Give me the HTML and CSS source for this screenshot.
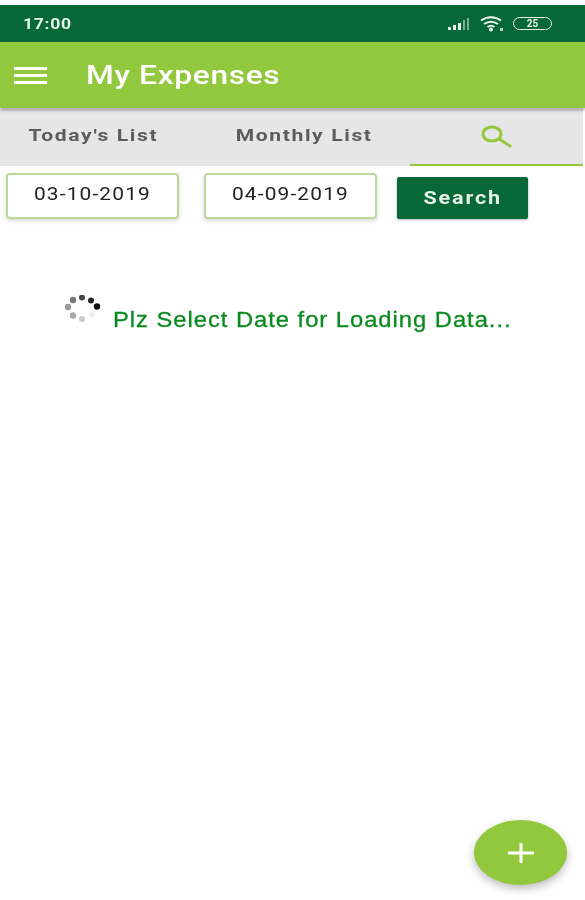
FILE: index.html
```html
<!DOCTYPE html>
<html lang="en">
<head>
    <meta charset="UTF-8">
    <meta name="viewport" content="width=device-width, initial-scale=1.0">
    <title>My Expenses</title>
    <link rel="stylesheet" href="styles.css">
</head>
<body>
    <div class="status-bar">
        <span class="clock">17:00</span>
        <div class="status-icons">
            <svg width="24" height="14" viewBox="0 0 24 14">
                <rect x="1" y="10" width="3" height="3" fill="#e8f2e8"/>
                <rect x="6" y="8" width="3" height="5" fill="#e8f2e8"/>
                <rect x="11" y="6" width="3" height="7" fill="#e8f2e8"/>
                <rect x="16" y="3" width="2" height="10" fill="#7fae8c"/>
                <rect x="20" y="1" width="2" height="12" fill="#7fae8c"/>
            </svg>
            <svg width="24" height="16" viewBox="0 0 24 16" fill="none" stroke="#eef5ee" stroke-width="2">
                <path d="M1 4.500C7 0 15 0 21 4.500"/>
                <path d="M4 8C8.500 5 13.500 5 18 8"/>
                <path d="M7.500 11C9.500 9.500 12.500 9.500 14.500 11"/>
                <circle cx="11" cy="13.500" r="1" fill="#eef5ee"/>
                <rect x="20" y="12" width="3" height="3" stroke="none" fill="#b5d0bb"/>
            </svg>
            <div class="battery">25</div>
        </div>
    </div>

    <header class="app-bar">
        <div class="menu-icon"><span></span><span></span><span></span></div>
        <h1>My Expenses</h1>
    </header>

    <nav class="tabs">
        <a class="tab tab-today"><span>Today's List</span></a>
        <a class="tab tab-month"><span>Monthly List</span></a>
        <a class="tab tab-search">
            <svg width="31" height="23" viewBox="0 0 31 23" fill="none" stroke="#92c83e" stroke-width="3">
                <ellipse cx="11" cy="9" rx="9" ry="7"/>
                <path d="M18 14L29 21" stroke-linecap="round"/>
            </svg>
        </a>
    </nav>

    <form class="search-row">
        <div class="date-box"><span>03-10-2019</span></div>
        <div class="date-box"><span>04-09-2019</span></div>
        <button type="button" class="search-btn"><span>Search</span></button>
    </form>

    <div class="loading">
        <svg class="spinner" width="40" height="30" viewBox="0 0 40 30">
            <circle cx="18" cy="2.500" r="3" fill="#444"/>
            <circle cx="27" cy="5.500" r="3" fill="#222"/>
            <circle cx="33" cy="11.500" r="3.200" fill="#111"/>
            <circle cx="28" cy="20" r="2.800" fill="#eee"/>
            <circle cx="18" cy="24" r="3" fill="#ccc"/>
            <circle cx="9" cy="20.500" r="3.200" fill="#aaa"/>
            <circle cx="4" cy="12" r="3.200" fill="#999"/>
            <circle cx="9" cy="5" r="3.200" fill="#777"/>
        </svg>
        <span class="loading-text">Plz Select Date for Loading Data...</span>
    </div>

    <button type="button" class="fab">
        <svg width="26" height="20" viewBox="0 0 26 20" stroke="#fff" stroke-width="3">
            <path d="M0 10H26M13 0V20"/>
        </svg>
    </button>
</body>
</html>
```

FILE: styles.css
```css
html, body {
    height: 100%;
}
body {
    font-family: Roboto, "Liberation Sans", sans-serif;
    margin: 0;
    padding-top: 5px;
    box-sizing: border-box;
    background-color: #fff;
    overflow: hidden;
    filter: blur(0.6px);
}
.status-bar {
    height: 37px;
    background: #076837;
    color: #e8f2e8;
    display: flex;
    align-items: center;
    justify-content: space-between;
    padding: 0 33px 0 23px;
}
.clock {
    display: inline-block;
    font-size: 15px;
    font-weight: 700;
    letter-spacing: 0.6px;
    transform: scaleX(1.17);
    transform-origin: left center;
}
.status-icons {
    display: flex;
    align-items: center;
    gap: 9px;
}
.battery {
    width: 37px;
    height: 11px;
    border: 1px solid #e8f2e8;
    border-radius: 7px;
    font-size: 10px;
    line-height: 11px;
    text-align: center;
    font-weight: 700;
}
.app-bar {
    height: 66px;
    background: #92c83e;
    display: flex;
    align-items: center;
    padding-left: 14px;
    box-shadow: 0px 2px 3px rgba(0, 0, 0, 0.35);
    position: relative;
}
.app-bar h1 {
    margin: 0 0 0 39px;
    color: #fff;
    font-size: 25px;
    font-weight: 500;
    letter-spacing: 0.5px;
    transform: scaleX(1.27);
    transform-origin: left center;
}
.menu-icon {
    width: 33px;
    display: flex;
    flex-direction: column;
    gap: 4px;
}
.menu-icon span {
    height: 3px;
    background: #fff;
}
.tabs {
    height: 57px;
    margin-top: 1px;
    margin-right: 2px;
    background: #e6e6e6;
    display: flex;
    box-sizing: border-box;
}
.tab {
    display: flex;
    align-items: center;
    justify-content: center;
    color: #5c5c5c;
    font-size: 17px;
    font-weight: 700;
    letter-spacing: 1.3px;
    padding-bottom: 5px;
    box-sizing: border-box;
}
.tab span {
    display: inline-block;
    transform: scaleX(1.24);
}
.tab-today {
    width: 186px;
}
.tab-month {
    width: 224px;
    padding-left: 12px;
}
.tab-search {
    flex: 1;
    border-bottom: 2px solid #92c83e;
    padding-bottom: 0;
}
.search-row {
    display: flex;
    align-items: flex-start;
    margin: 7px 0 0 6px;
}
.date-box {
    width: 173px;
    height: 46px;
    box-sizing: border-box;
    background: #fff;
    border: 2px solid #bcd896;
    border-radius: 4px;
    box-shadow: 0px 2px 4px rgba(0, 0, 0, 0.15);
    color: #222;
    font-size: 18px;
    letter-spacing: 1px;
    text-align: center;
    line-height: 38px;
    margin-right: 25px;
}
.date-box span {
    display: inline-block;
    transform: scaleX(1.16);
}
.date-box + .date-box {
    margin-right: 20px;
}
.search-btn {
    width: 131px;
    height: 42px;
    margin-top: 4px;
    padding-bottom: 3px;
    background: #076837;
    color: #e8f2e8;
    border: none;
    border-radius: 2px;
    font-family: inherit;
    font-size: 18px;
    font-weight: 700;
    letter-spacing: 1.5px;
    box-shadow: 0px 1px 3px rgba(0, 0, 0, 0.3);
}
.search-btn span {
    display: inline-block;
    transform: scaleX(1.2);
}
.loading {
    display: flex;
    align-items: flex-start;
    margin: 76px 0 0 64px;
}
.spinner {
    flex-shrink: 0;
}
.loading-text {
    margin: 12px 0 0 9px;
    color: #0a8a1e;
    font-family: "Liberation Sans", Arial, sans-serif;
    font-size: 22px;
    letter-spacing: 0.9px;
    -webkit-text-stroke: 0.3px #0a8a1e;
    white-space: nowrap;
    transform: scaleX(1.08);
    transform-origin: left center;
}
.fab {
    position: absolute;
    left: 474px;
    top: 820px;
    width: 93px;
    height: 65px;
    background: #92c83e;
    border: none;
    border-radius: 50%;
    box-shadow: 0px 4px 8px rgba(0, 0, 0, 0.25);
    display: flex;
    align-items: center;
    justify-content: center;
    padding: 0;
}
```
